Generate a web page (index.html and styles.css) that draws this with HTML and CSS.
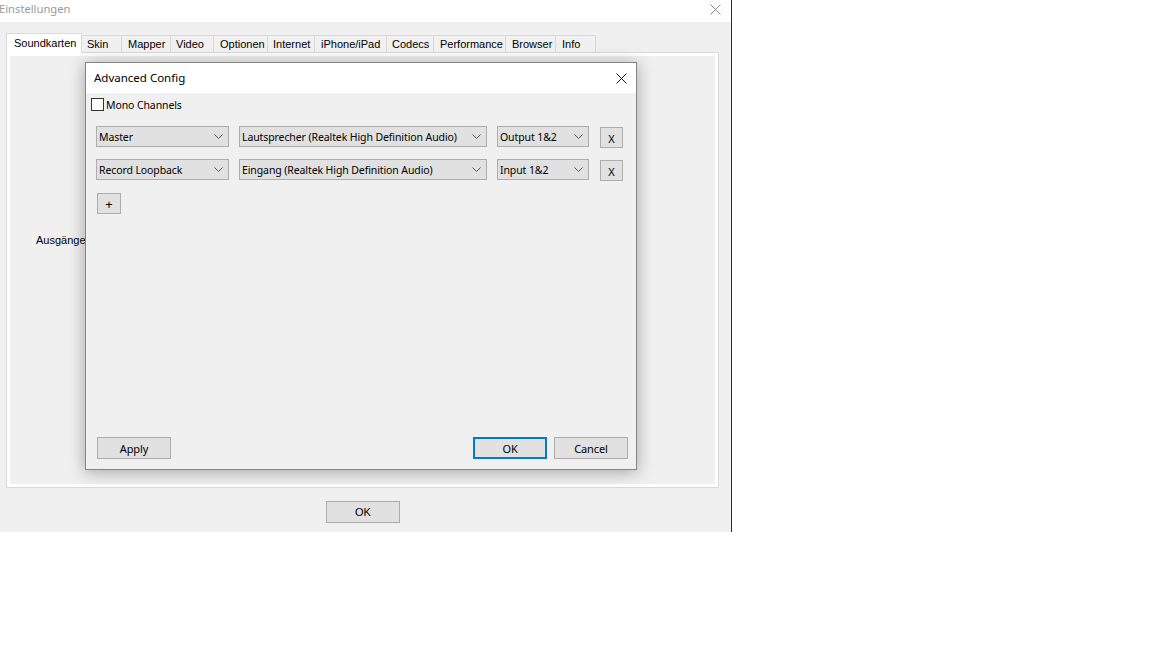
FILE: index.html
```html
<!DOCTYPE html>
<html lang="de">
<head>
<meta charset="utf-8">
<title>Einstellungen</title>
<link rel="stylesheet" href="styles.css">
</head>
<body>
<div class="window">
  <div class="titlebar">
    <span class="title">Einstellungen</span>
    <svg class="win-close" width="11" height="11" viewBox="0 0 11 11"><path d="M0.5 0.5L10.5 10.5M10.5 0.5L0.5 10.5" stroke="#8c8c8c" stroke-width="1" fill="none"/></svg>
  </div>
  <div class="content">
    <div class="tabs">
      <div class="tab active t1">Soundkarten</div>
      <div class="tab t2">Skin</div>
      <div class="tab t3">Mapper</div>
      <div class="tab t4">Video</div>
      <div class="tab t5">Optionen</div>
      <div class="tab t6">Internet</div>
      <div class="tab t7">iPhone/iPad</div>
      <div class="tab t8">Codecs</div>
      <div class="tab t9">Performance</div>
      <div class="tab t10">Browser</div>
      <div class="tab t11 last">Info</div>
    </div>
    <div class="panel">
      <div class="panel-inner">
        <div class="field-label">Ausgänge</div>
      </div>
    </div>
    <div class="footer">
      <div class="btn main-ok">OK</div>
    </div>
  </div>
</div>

<div class="dialog">
  <div class="dlg-title">
    <span>Advanced Config</span>
    <svg class="dlg-close" width="11" height="11" viewBox="0 0 11 11"><path d="M0.5 0.5L10.5 10.5M10.5 0.5L0.5 10.5" stroke="#111" stroke-width="1" fill="none"/></svg>
  </div>
  <div class="dlg-body">
    <label class="check-row"><span class="checkbox"></span><span>Mono Channels</span></label>

    <div class="row first">
      <div class="combo c-ch"><span>Master</span><svg width="9" height="5" viewBox="0 0 9 5"><path d="M0.5 0.5L4.5 4.5L8.5 0.5" stroke="#555" fill="none"/></svg></div>
      <div class="combo c-dev"><span>Lautsprecher (Realtek High Definition Audio)</span><svg width="9" height="5" viewBox="0 0 9 5"><path d="M0.5 0.5L4.5 4.5L8.5 0.5" stroke="#555" fill="none"/></svg></div>
      <div class="combo c-io"><span>Output 1&amp;2</span><svg width="9" height="5" viewBox="0 0 9 5"><path d="M0.5 0.5L4.5 4.5L8.5 0.5" stroke="#555" fill="none"/></svg></div>
      <div class="btn xbtn">X</div>
    </div>

    <div class="row second">
      <div class="combo c-ch"><span>Record Loopback</span><svg width="9" height="5" viewBox="0 0 9 5"><path d="M0.5 0.5L4.5 4.5L8.5 0.5" stroke="#555" fill="none"/></svg></div>
      <div class="combo c-dev"><span>Eingang (Realtek High Definition Audio)</span><svg width="9" height="5" viewBox="0 0 9 5"><path d="M0.5 0.5L4.5 4.5L8.5 0.5" stroke="#555" fill="none"/></svg></div>
      <div class="combo c-io"><span>Input 1&amp;2</span><svg width="9" height="5" viewBox="0 0 9 5"><path d="M0.5 0.5L4.5 4.5L8.5 0.5" stroke="#555" fill="none"/></svg></div>
      <div class="btn xbtn">X</div>
    </div>

    <div class="btn plus">+</div>

    <div class="dlg-footer">
      <div class="btn dbtn">Apply</div>
      <div class="right-btns">
        <div class="btn dbtn default">OK</div>
        <div class="btn dbtn">Cancel</div>
      </div>
    </div>
  </div>
</div>
</body>
</html>
```

FILE: styles.css
```css
html, body {
  margin: 0;
  padding: 0;
  background: #ffffff;
}

body {
  width: 1152px;
  height: 648px;
  position: relative;
  overflow: hidden;
}

.window {
  width: 731px;
  height: 532px;
  border-right: 1px solid #2b2b2b;
  background: #f0f0f0;
  display: flex;
  flex-direction: column;
  font-family: "Liberation Sans", Arial, sans-serif;
  font-size: 11px;
  color: #000;
}

.titlebar {
  height: 22px;
  background: #ffffff;
  display: flex;
  align-items: flex-start;
  justify-content: space-between;
}

.title {
  font-family: "Noto Sans", sans-serif;
  font-size: 11.2px;
  color: #9a9a9a;
  line-height: 18px;
  margin-left: -1px;
}

.win-close {
  margin: 4px 10px 0 0;
}

.content {
  flex: 1;
  display: flex;
  flex-direction: column;
  padding: 11px 0 0 6px;
}

.tabs {
  display: flex;
  align-items: flex-end;
  height: 19px;
  position: relative;
  z-index: 1;
}

.tab {
  box-sizing: border-box;
  height: 17px;
  border: 1px solid #d9d9d9;
  border-bottom: none;
  border-right: none;
  background: #f0f0f0;
  padding-left: 6px;
  line-height: 16px;
  white-space: nowrap;
}

.tab.last {
  border-right: 1px solid #d9d9d9;
}

.tab.active {
  height: 20px;
  margin-bottom: -1px;
  background: #ffffff;
  border-right: 1px solid #d9d9d9;
  line-height: 18px;
  padding-left: 7px;
}

.t1 { width: 76px; }
.t2 { width: 39px; border-left: none; padding-left: 5px; }
.t3 { width: 49px; }
.t4 { width: 43px; padding-left: 5px; }
.t5 { width: 54px; }
.t6 { width: 47px; padding-left: 5px; }
.t7 { width: 72px; }
.t8 { width: 47px; padding-left: 5px; }
.t9 { width: 72px; }
.t10 { width: 50px; }
.t11 { width: 41px; }

.panel {
  box-sizing: border-box;
  width: 713px;
  height: 436px;
  border: 1px solid #d9d9d9;
  background: #ffffff;
  padding: 3px;
  display: flex;
}

.panel-inner {
  flex: 1;
  background: #f0f0f0;
}

.field-label {
  padding: 178px 0 0 26px;
  line-height: 13px;
}

.footer {
  padding: 13px 0 0 320px;
}

.btn {
  box-sizing: border-box;
  background: #e1e1e1;
  border: 1px solid #adadad;
  display: flex;
  align-items: center;
  justify-content: center;
}

.main-ok {
  width: 74px;
  height: 22px;
}

/* Dialog */
.dialog {
  position: absolute;
  left: 85px;
  top: 62px;
  width: 552px;
  height: 408px;
  box-sizing: border-box;
  border: 1px solid #858585;
  background: #f0f0f0;
  box-shadow: 0 2px 16px rgba(0, 0, 0, 0.32);
  display: flex;
  flex-direction: column;
  font-family: "Noto Sans", sans-serif;
  font-size: 10.5px;
  letter-spacing: -0.1px;
  color: #000;
}

.dlg-title {
  height: 30px;
  flex: none;
  box-sizing: border-box;
  padding: 0 0 2px 8px;
  background: #ffffff;
  display: flex;
  align-items: center;
  justify-content: space-between;
  font-size: 11.5px;
  letter-spacing: 0;
}

.dlg-close {
  margin: 2px 9px 0 0;
}

.dlg-body {
  flex: 1;
  display: flex;
  flex-direction: column;
  padding: 5px 8px 10px 5px;
}

.check-row {
  display: flex;
  align-items: center;
  height: 13px;
  gap: 2px;
}

.checkbox {
  box-sizing: border-box;
  width: 13px;
  height: 13px;
  border: 1px solid #333333;
  background: #ffffff;
}

.row {
  display: flex;
  align-items: flex-start;
  margin-left: 5px;
  height: 21px;
}

.row.first { margin-top: 15px; }
.row.second { margin-top: 12px; }

.combo {
  box-sizing: border-box;
  height: 21px;
  background: #e1e1e1;
  border: 1px solid #adadad;
  display: flex;
  align-items: center;
  justify-content: space-between;
  padding: 0 5px 0 2px;
  margin-right: 10px;
  white-space: nowrap;
}

.c-ch { width: 133px; }
.c-dev { width: 248px; }
.c-io { width: 92px; margin-right: 11px; }

.xbtn {
  width: 23px;
  height: 21px;
  margin-top: 1px;
  padding-top: 2px;
  font-size: 11px;
}

.plus {
  width: 24px;
  height: 21px;
  margin: 13px 0 0 6px;
  font-size: 13px;
}

.dlg-footer {
  margin-top: auto;
  display: flex;
  justify-content: space-between;
  padding-left: 6px;
}

.right-btns {
  display: flex;
  gap: 7px;
}

.dbtn {
  width: 74px;
  height: 22px;
  font-size: 11px;
}

.dbtn.default {
  border: 2px solid #0078d7;
}
```
